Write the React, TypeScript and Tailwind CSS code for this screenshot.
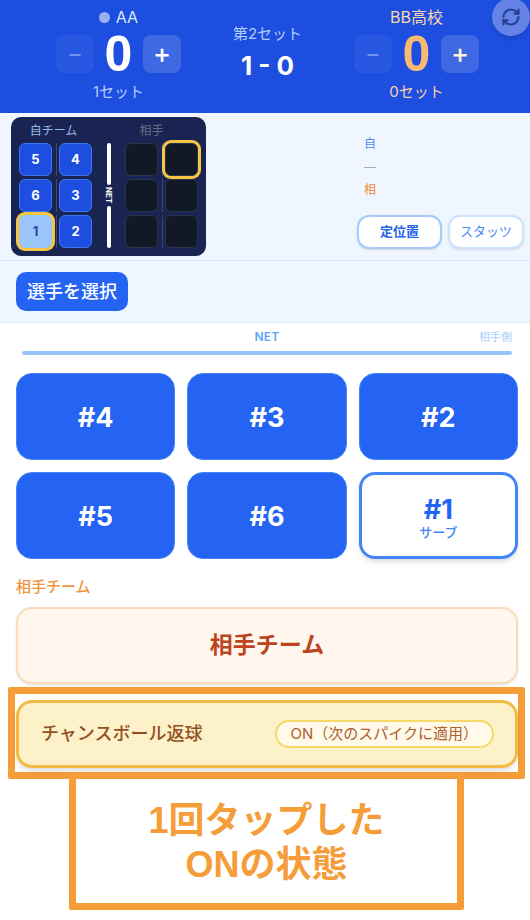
import { useState } from "react";
import { RefreshCw } from "lucide-react";
import { clsx } from "clsx";

const homeCells = [5, 4, 6, 3, 1, 2];
const awayCells = [0, 1, 2, 3, 4, 5];
const courtPlayers = [4, 3, 2, 5, 6, 1];
const servingPlayer = 1;

type TeamScoreProps = {
  name: string;
  initialScore: number;
  sets: number;
  away?: boolean;
};

function TeamScore({ name, initialScore, sets, away }: TeamScoreProps) {
  const [score, setScore] = useState(initialScore);

  return (
    <div className="flex flex-col items-center">
      <div
        className={clsx(
          "flex items-center gap-1.5 text-base leading-5",
          away ? "text-[#fbd7ac]" : "text-[#dbe8fe]"
        )}
      >
        {!away && <span className="size-[11px] rounded-full bg-[#9aaff0]" />}
        {name}
      </div>
      <div className="mt-2 flex items-center">
        <button
          aria-label={`${name} -1`}
          disabled={score === 0}
          onClick={() => setScore(score - 1)}
          className="flex size-[38px] items-center justify-center rounded-lg bg-white/15 text-2xl leading-6 text-white disabled:bg-white/5 disabled:text-white/35"
        >
          −
        </button>
        <span
          className={clsx(
            "w-[49px] text-center font-['Liberation_Sans',sans-serif] text-[50px] leading-[38px] font-bold",
            away ? "text-[#f7b973]" : "text-white"
          )}
        >
          {score}
        </span>
        <button
          aria-label={`${name} +1`}
          onClick={() => setScore(score + 1)}
          className={clsx(
            "flex size-[38px] items-center justify-center rounded-lg bg-white/15 text-[27px] leading-7 font-medium",
            away ? "text-[#ffeed8]" : "text-white"
          )}
        >
          +
        </button>
      </div>
      <div
        className={clsx(
          "mt-[7px] text-[15px] leading-6",
          away ? "text-[#f6cfaa]" : "text-[#b4cdf9]"
        )}
      >
        {sets}セット
      </div>
    </div>
  );
}

function CourtDivider() {
  return (
    <div className="absolute inset-y-0 left-1/2 flex w-px flex-col gap-[3px]">
      <span className="flex-1 bg-[#3b466a]" />
      <span className="flex-1 bg-[#3b466a]" />
      <span className="flex-1 bg-[#3b466a]" />
    </div>
  );
}

function MiniCourt() {
  return (
    <div className="flex h-[139px] rounded-[10px] bg-[#1a2452] px-2 pt-[5px] text-xs">
      <div>
        <div className="pr-1 text-center leading-[18px] text-[#93b8ec]">自チーム</div>
        <div className="relative mt-[3px] grid grid-cols-2 gap-x-[7px] gap-y-[3px]">
          <CourtDivider />
          {homeCells.map((n) => (
            <div
              key={n}
              className={clsx(
                "flex size-[33px] items-center justify-center rounded-md border text-[13px] font-bold",
                n === servingPlayer
                  ? "z-10 border-[#93c5fd] bg-[#9cc5fb] text-[#2546a0] ring-3 ring-[#f6c544]"
                  : "border-[#3b78f0] bg-[#1d4ee0] text-white"
              )}
            >
              {n}
            </div>
          ))}
        </div>
      </div>

      <div className="mx-[11px] mt-[21px] mb-2 flex w-[11px] flex-col items-center gap-0.5">
        <span className="w-1 flex-1 rounded-full bg-white" />
        <span className="text-[8px] leading-[10px] font-bold text-white [writing-mode:vertical-rl]">
          NET
        </span>
        <span className="w-1 flex-1 rounded-full bg-white" />
      </div>

      <div>
        <div className="pr-5 text-center leading-[18px] text-[#666d82]">相手</div>
        <div className="relative mt-[3px] grid grid-cols-2 gap-x-[7px] gap-y-[3px]">
          <CourtDivider />
          {awayCells.map((n) => (
            <div
              key={n}
              className={clsx(
                "size-[33px] rounded-md border border-[#2b3347] bg-[#121926]",
                n === 1 && "z-10 ring-3 ring-[#f6c544]"
              )}
            />
          ))}
        </div>
      </div>
    </div>
  );
}

export default function App() {
  const [chanceBall, setChanceBall] = useState(true);

  return (
    <div className="relative min-h-screen overflow-hidden bg-white pb-2.5 font-['Inter','Noto_Sans_CJK_JP',sans-serif]">
      <button
        aria-label="更新"
        className="absolute -top-0.5 right-0 z-10 flex size-[38px] items-center justify-center rounded-full bg-[#6583e6] text-[#26408f] shadow-md"
      >
        <RefreshCw size={20} strokeWidth={2.6} />
      </button>

      {/* Score header */}
      <header className="flex h-[113px] items-start justify-between bg-[#1d4ee0] pt-[7px] pr-[51px] pl-14">
        <TeamScore name="AA" initialScore={0} sets={1} />
        <div className="mt-[17px] flex flex-col items-center text-white">
          <span className="text-[15px] leading-5 text-[#b4cdf9]">第2セット</span>
          <span className="mt-1.5 text-[26px] leading-8 font-bold">1 - 0</span>
        </div>
        <TeamScore name="BB高校" initialScore={0} sets={0} away />
      </header>

      {/* Rotation */}
      <section className="flex justify-between border-b border-[#dbe8fd] bg-[#eff6ff] pt-1 pr-1.5 pb-1 pl-[11px]">
        <MiniCourt />
        <div className="flex flex-col pt-[15px]">
          <div className="flex flex-col pl-[7px] text-xs leading-[23px]">
            <span className="text-[#4b8af5]">自</span>
            <span className="text-[#a3abb8]">—</span>
            <span className="text-[#f28a35]">相</span>
          </div>
          <div className="mt-3.5 flex gap-1.5 text-[13px]">
            <button className="h-[34px] w-[85px] rounded-xl border-2 border-[#a3cbfc] bg-white font-bold text-[#2563eb] shadow-sm">
              定位置
            </button>
            <button className="h-[34px] w-[76px] rounded-xl border-2 border-[#cfe2fd] bg-white text-[#4b8af5] shadow-sm">
              スタッツ
            </button>
          </div>
        </div>
      </section>

      <section className="border-b border-[#dbe8fd] bg-[#eff6ff] py-[11px] pl-4">
        <button className="h-[39px] rounded-[10px] bg-[#2563f3] px-[11px] text-lg font-medium text-white">
          選手を選択
        </button>
      </section>

      <main className="pt-[5px] pr-3 pl-4">
        <div className="px-1.5">
          <div className="grid grid-cols-3 items-center">
            <span className="col-start-2 text-center text-xs leading-[18px] font-semibold tracking-wide text-[#60a5fa]">
              NET
            </span>
            <span className="text-right text-[11px] leading-[18px] text-[#a6cffb]">相手側</span>
          </div>
          <div className="mt-[5px] h-1 rounded-full bg-[#98c5fd]" />
        </div>

        {/* Court */}
        <div className="mt-[18px] grid grid-cols-3 gap-3">
          {courtPlayers.map((n) => (
            <button
              key={n}
              className={clsx(
                "flex h-[87px] flex-col items-center justify-center rounded-2xl text-[27px] leading-7 font-bold",
                n === servingPlayer
                  ? "border-3 border-[#4385f7] bg-white pt-1 text-[#2563f3] shadow-md"
                  : "border border-[#4385f7] bg-[#2563f3] pt-0.5 text-white"
              )}
            >
              #{n}
              {n === servingPlayer && (
                <span className="text-[13px] leading-4 font-medium text-[#4385f7]">サーブ</span>
              )}
            </button>
          ))}
        </div>

        <h2 className="mt-4 text-[15px] leading-6 font-medium text-[#f3953d]">相手チーム</h2>
        <button className="mt-2 h-[77px] w-full rounded-2xl border-2 border-[#fadcb8] bg-[#fff7ed] text-[23px] font-bold text-[#bc4420] shadow-sm">
          相手チーム
        </button>
      </main>

      {/* Highlighted toggle */}
      <div className="mt-[3px] mr-[5px] ml-2 rounded-xs border-7 border-[#f49d39] pt-1.5 pb-1 pl-px">
        <button
          aria-pressed={chanceBall}
          onClick={() => setChanceBall(!chanceBall)}
          className={clsx(
            "flex h-[68px] w-full items-center justify-between rounded-2xl border-3 pr-[21px] pl-[22px] shadow-md",
            chanceBall ? "border-[#f4bb42] bg-[#fcf1c8]" : "border-[#fde68a] bg-white"
          )}
        >
          <span className="text-lg font-medium text-[#92501f]">チャンスボール返球</span>
          <span className="rounded-full border-2 border-[#f8d868] bg-[#fffaea] px-3.5 text-[15px] leading-6 text-[#b0612c]">
            {chanceBall ? "ON（次のスパイクに適用）" : "OFF"}
          </span>
        </button>
      </div>

      <p className="-mt-[7px] mr-[66px] ml-[69px] rounded-xs border-7 border-[#f49d39] pt-5 pb-4 text-center font-['Liberation_Sans','Noto_Sans_CJK_JP',sans-serif] text-4xl leading-[44px] font-bold text-[#f49d39]">
        1回タップした
        <br />
        ONの状態
      </p>
    </div>
  );
}
